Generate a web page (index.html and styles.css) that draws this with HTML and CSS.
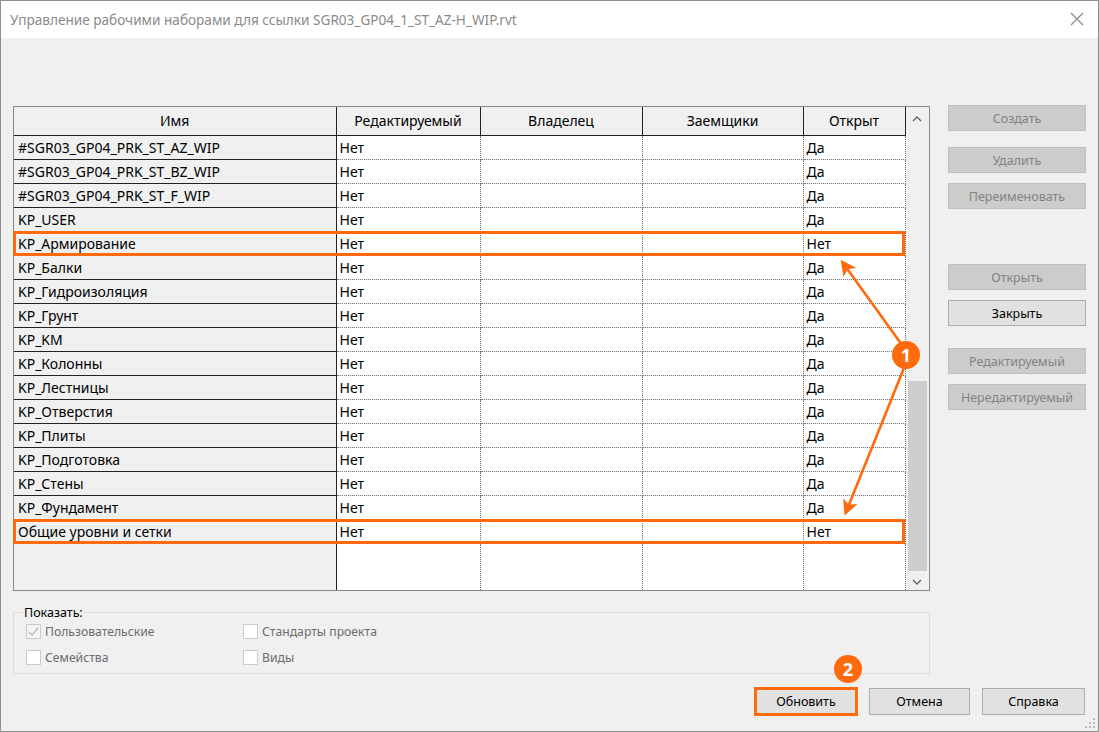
FILE: index.html
```html
<!DOCTYPE html>
<html lang="ru">
<head>
<meta charset="utf-8">
<link rel="stylesheet" href="styles.css">
</head>
<body>
<div class="window">
  <div class="titlebar">
    <span class="title">Управление рабочими наборами для ссылки SGR03_GP04_1_ST_AZ-H_WIP.rvt</span>
    <svg class="close" width="14" height="14" viewBox="0 0 14 14"><path d="M1 1L13 13M13 1L1 13" stroke="#8a8a8a" stroke-width="1.2"/></svg>
  </div>
  <div class="content">
    <div class="main">
      <div class="left">
        <div class="grid">
          <table class="tbl">
            <colgroup><col class="c1"><col class="c2"><col class="c3"><col class="c4"><col class="c5"></colgroup>
            <thead>
              <tr><th>Имя</th><th>Редактируемый</th><th>Владелец</th><th>Заемщики</th><th>Открыт</th></tr>
            </thead>
            <tbody>
              <tr><td class="nm">#SGR03_GP04_PRK_ST_AZ_WIP</td><td>Нет</td><td></td><td></td><td>Да</td></tr>
              <tr><td class="nm">#SGR03_GP04_PRK_ST_BZ_WIP</td><td>Нет</td><td></td><td></td><td>Да</td></tr>
              <tr><td class="nm">#SGR03_GP04_PRK_ST_F_WIP</td><td>Нет</td><td></td><td></td><td>Да</td></tr>
              <tr><td class="nm">KP_USER</td><td>Нет</td><td></td><td></td><td>Да</td></tr>
              <tr><td class="nm">KP_Армирование</td><td>Нет</td><td></td><td></td><td>Нет</td></tr>
              <tr><td class="nm">KP_Балки</td><td>Нет</td><td></td><td></td><td>Да</td></tr>
              <tr><td class="nm">KP_Гидроизоляция</td><td>Нет</td><td></td><td></td><td>Да</td></tr>
              <tr><td class="nm">KP_Грунт</td><td>Нет</td><td></td><td></td><td>Да</td></tr>
              <tr><td class="nm">KP_KM</td><td>Нет</td><td></td><td></td><td>Да</td></tr>
              <tr><td class="nm">KP_Колонны</td><td>Нет</td><td></td><td></td><td>Да</td></tr>
              <tr><td class="nm">KP_Лестницы</td><td>Нет</td><td></td><td></td><td>Да</td></tr>
              <tr><td class="nm">KP_Отверстия</td><td>Нет</td><td></td><td></td><td>Да</td></tr>
              <tr><td class="nm">KP_Плиты</td><td>Нет</td><td></td><td></td><td>Да</td></tr>
              <tr><td class="nm">KP_Подготовка</td><td>Нет</td><td></td><td></td><td>Да</td></tr>
              <tr><td class="nm">KP_Стены</td><td>Нет</td><td></td><td></td><td>Да</td></tr>
              <tr><td class="nm">KP_Фундамент</td><td>Нет</td><td></td><td></td><td>Да</td></tr>
              <tr><td class="nm">Общие уровни и сетки</td><td>Нет</td><td></td><td></td><td>Нет</td></tr>
              <tr class="filler"><td class="nm"></td><td></td><td></td><td></td><td></td></tr>
            </tbody>
          </table>
          <div class="scrollbar">
            <svg class="arrow" width="10" height="6" viewBox="0 0 10 6"><path d="M1 5L5 1L9 5" fill="none" stroke="#606060" stroke-width="1.3"/></svg>
            <div class="track"><div class="thumb"></div></div>
            <svg class="arrow" width="10" height="6" viewBox="0 0 10 6"><path d="M1 1L5 5L9 1" fill="none" stroke="#606060" stroke-width="1.3"/></svg>
          </div>
        </div>
        <fieldset class="group">
          <legend>Показать:</legend>
          <div class="checks">
            <label class="chk"><span class="box checked"><svg width="13" height="13" viewBox="0 0 13 13"><path d="M2 7L5 10L11 3" fill="none" stroke="#b8b8b8" stroke-width="1.2"/></svg></span>Пользовательские</label>
            <label class="chk"><span class="box"></span>Стандарты проекта</label>
            <label class="chk"><span class="box"></span>Семейства</label>
            <label class="chk"><span class="box"></span>Виды</label>
          </div>
        </fieldset>
      </div>
      <div class="side">
        <div class="btn dis">Создать</div>
        <div class="btn dis g1">Удалить</div>
        <div class="btn dis g2">Переименовать</div>
        <div class="btn dis g3">Открыть</div>
        <div class="btn on g2">Закрыть</div>
        <div class="btn dis g4">Редактируемый</div>
        <div class="btn dis g2">Нередактируемый</div>
      </div>
    </div>
    <div class="footer">
      <div class="btn on fb hl">Обновить</div>
      <div class="btn on fb">Отмена</div>
      <div class="btn on fb">Справка</div>
    </div>
    <svg class="grip" width="10" height="10" viewBox="0 0 10 10">
      <rect x="8" y="0" width="2" height="2" fill="#bbb"/>
      <rect x="4" y="4" width="2" height="2" fill="#bbb"/><rect x="8" y="4" width="2" height="2" fill="#bbb"/>
      <rect x="0" y="8" width="2" height="2" fill="#bbb"/><rect x="4" y="8" width="2" height="2" fill="#bbb"/><rect x="8" y="8" width="2" height="2" fill="#bbb"/>
    </svg>
  </div>
  <svg class="annot" width="1099" height="732" viewBox="0 0 1099 732">
    <defs>
      <marker id="ah" markerWidth="6" markerHeight="6" refX="4.5" refY="3" orient="auto" markerUnits="strokeWidth">
        <path d="M0 0L6 3L0 6L1.5 3Z" fill="#ff6a0c"/>
      </marker>
    </defs>
    <rect x="14.5" y="232.5" width="889" height="22" fill="none" stroke="#ff6a0c" stroke-width="3"/>
    <rect x="14.5" y="520.5" width="889" height="22" fill="none" stroke="#ff6a0c" stroke-width="3"/>
    <line x1="902" y1="345" x2="843" y2="263" stroke="#ff6a0c" stroke-width="2.6" marker-end="url(#ah)"/>
    <line x1="904" y1="368" x2="846" y2="512" stroke="#ff6a0c" stroke-width="2.6" marker-end="url(#ah)"/>
    <circle cx="906" cy="355" r="14" fill="#ff6a0c"/>
    <text x="906" y="361.5" class="badge">1</text>
    <circle cx="848" cy="669" r="14" fill="#ff6a0c"/>
    <text x="848" y="675.5" class="badge">2</text>
  </svg>
</div>
</body>
</html>
```
FILE: styles.css
```css
* { box-sizing: border-box; }
html, body { margin: 0; padding: 0; }
body {
  width: 1099px;
  height: 732px;
  font-family: "Noto Sans", "Open Sans", sans-serif;
  font-size: 13.5px;
  color: #000;
  background: #fff;
  overflow: hidden;
}
.window {
  position: relative;
  width: 1099px;
  height: 732px;
  border: 1px solid #8e8e8e;
  background: #f0f0f0;
  display: flex;
  flex-direction: column;
}
.titlebar {
  height: 37px;
  background: #fff;
  display: flex;
  align-items: center;
  justify-content: space-between;
  padding: 0 14px 1px 9px;
  flex: none;
}
.title {
  font-size: 13.6px;
  color: #8a8a8a;
}
.close { margin-right: 0; }
.content {
  position: relative;
  flex: 1;
  padding: 68px 12px 0 12px;
  display: flex;
  flex-direction: column;
}
.main {
  display: flex;
  gap: 18px;
}
.left {
  width: 917px;
  display: flex;
  flex-direction: column;
}
.grid {
  height: 485px;
  border: 1px solid #828790;
  background: #f0f0f0;
  display: flex;
  overflow: hidden;
}
.tbl {
  border-collapse: collapse;
  table-layout: fixed;
  width: 891px;
  align-self: flex-start;
  font-size: 14px;
}
.c1 { width: 322px; }
.c2 { width: 144px; }
.c3 { width: 162px; }
.c4 { width: 161px; }
.c5 { width: 102px; }
.tbl th {
  height: 28px;
  font-weight: normal;
  background: #f0f0f0;
  border: 1px solid #222;
  border-top: none;
  padding: 0;
  text-align: center;
}
.tbl th:first-child { border-left: none; }
.tbl td {
  height: 24px;
  padding: 0 0 0 3px;
  background: #fff;
  border: 1px dotted #777;
  white-space: nowrap;
  overflow: hidden;
}
.tbl td.nm {
  background: #f0f0f0;
  border: 1px solid #222;
  border-left: none;
  padding-left: 4px;
}
.tbl tr.filler td { height: 47px; border-bottom: none; }
.tbl tr.filler td.nm { border-bottom: 1px solid #222; }
.scrollbar {
  width: 24px;
  margin-left: auto;
  display: flex;
  flex-direction: column;
  align-items: center;
  background: #f0f0f0;
  padding: 9px 0 5px;
}
.arrow { flex: none; }
.track {
  flex: 1;
  width: 19px;
  display: flex;
  flex-direction: column;
  justify-content: flex-end;
  padding: 8px 0 8px;
}
.thumb {
  height: 190px;
  background: #cdcdcd;
}
.group {
  margin: 13px 0 0 0;
  padding: 6px 12px 6px 12px;
  border: 1px solid #dcdcdc;
  height: 70px;
}
.group legend {
  padding: 0 1px;
  margin-left: -3px;
  font-size: 12.5px;
  color: #000;
}
.checks {
  display: grid;
  grid-template-columns: 217px 200px;
  row-gap: 10px;
  margin-top: -4px;
}
.chk {
  display: flex;
  align-items: center;
  font-size: 12.2px;
  color: #6d6d6d;
  height: 16px;
}
.box {
  width: 15px;
  height: 15px;
  border: 1px solid #cccccc;
  background: #fff;
  margin-right: 4px;
  display: inline-flex;
  align-items: center;
  justify-content: center;
}
.box.checked { background: #f4f4f4; }
.side {
  width: 138px;
  display: flex;
  flex-direction: column;
  margin-top: -1px;
}
.btn {
  height: 26px;
  display: flex;
  align-items: center;
  justify-content: center;
  font-size: 12.5px;
  border: 1px solid #adadad;
  background: #e1e1e1;
}
.btn.dis {
  background: #cccccc;
  border-color: #bfbfbf;
  color: #838383;
}
.btn.g1 { margin-top: 16px; }
.btn.g2 { margin-top: 10px; }
.btn.g3 { margin-top: 55px; }
.btn.g4 { margin-top: 22px; }
.footer {
  display: flex;
  justify-content: flex-end;
  gap: 12px;
  margin-top: 14px;
  padding-right: 1px;
}
.btn.fb {
  width: 101px;
  height: 27px;
  font-size: 12.5px;
}
.btn.fb:nth-child(1) { width: 102px; }
.btn.fb:nth-child(3) { width: 103px; }
.btn.hl {
  outline: 3px solid #ff6a0c;
  outline-offset: -2px;
}
.grip {
  position: absolute;
  right: 3px;
  bottom: 3px;
}
.annot {
  position: absolute;
  left: -1px;
  top: -1px;
  pointer-events: none;
}
.badge {
  font-family: "Noto Sans", sans-serif;
  font-weight: bold;
  font-size: 18px;
  fill: #fff;
  text-anchor: middle;
}
```
